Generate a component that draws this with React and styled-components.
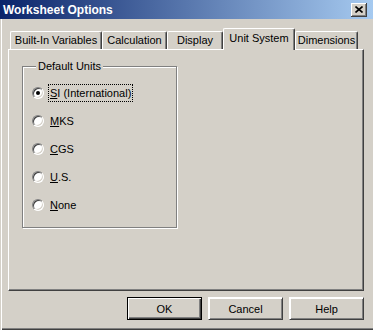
import React from 'react';
import styled, { createGlobalStyle } from 'styled-components';

const GlobalStyle = createGlobalStyle`
  html, body {
    margin: 0;
    padding: 0;
    background: #d4d0c8;
  }
  body {
    font-family: "Liberation Sans", Arial, sans-serif;
    font-size: 11px;
    color: #000;
  }
`;

const tabs = [
  { label: 'Built-In Variables', width: 92 },
  { label: 'Calculation', width: 65 },
  { label: 'Display', width: 56 },
  { label: 'Unit System', width: 72, active: true },
  { label: 'Dimensions', width: 63 },
];

const units = [
  { key: 'S', rest: 'I (International)', checked: true },
  { key: 'M', rest: 'KS' },
  { key: 'C', rest: 'GS' },
  { key: 'U', rest: '.S.' },
  { key: 'N', rest: 'one' },
];

const App = () => (
  <>
    <GlobalStyle />
    <Window>
      <TitleBar>
        <Title>Worksheet Options</Title>
        <CloseButton aria-label="Close">
          <svg width="8" height="7" viewBox="0 0 8 7">
            <path d="M0.5 0.5 L7.5 6.5 M7.5 0.5 L0.5 6.5" stroke="#000" strokeWidth="1.6" />
          </svg>
        </CloseButton>
      </TitleBar>
      <Body>
        <TabStrip>
          {tabs.map(t => (
            <Tab key={t.label} $width={t.width} $active={t.active}>
              {t.label}
            </Tab>
          ))}
        </TabStrip>
        <Panel>
          <GroupBox>
            <Legend>Default Units</Legend>
            <RadioList>
              {units.map(u => (
                <RadioRow key={u.key}>
                  <RadioDot $checked={u.checked} />
                  <RadioLabel $focused={u.checked}>
                    <u>{u.key}</u>
                    {u.rest}
                  </RadioLabel>
                </RadioRow>
              ))}
            </RadioList>
          </GroupBox>
        </Panel>
        <Footer>
          <Button $default>OK</Button>
          <Button>Cancel</Button>
          <Button>Help</Button>
        </Footer>
      </Body>
    </Window>
  </>
);

const Window = styled.div`
  width: 373px;
  height: 330px;
  display: flex;
  flex-direction: column;
  background: #d4d0c8;
  overflow: hidden;
`;

const TitleBar = styled.div`
  height: 19px;
  flex: none;
  display: flex;
  align-items: center;
  justify-content: space-between;
  padding: 0 6px 0 3px;
  background: linear-gradient(to right, #0a246a, #a6caf0);
`;

const Title = styled.span`
  color: #fff;
  font-weight: bold;
  font-size: 12px;
`;

const CloseButton = styled.div`
  width: 16px;
  height: 14px;
  box-sizing: border-box;
  background: #d4d0c8;
  display: flex;
  align-items: center;
  justify-content: center;
  box-shadow: inset -1px -1px 0 #404040, inset 1px 1px 0 #fff,
    inset -2px -2px 0 #808080, inset 2px 2px 0 #d4d0c8;
`;

const Body = styled.div`
  flex: 1;
  display: flex;
  flex-direction: column;
  padding: 9px 9px 0 8px;
  box-shadow: inset 1px 0 0 #d4d0c8, inset 2px 0 0 #fff,
    inset 0 -1px 0 #404040, inset 0 -2px 0 #808080;
`;

const TabStrip = styled.div`
  height: 21px;
  display: flex;
  align-items: flex-end;
  padding-left: 2px;
  position: relative;
  z-index: 1;
`;

const Tab = styled.div`
  width: ${p => p.$width}px;
  height: ${p => (p.$active ? 22 : 18)}px;
  margin-bottom: ${p => (p.$active ? -1 : 0)}px;
  box-sizing: border-box;
  display: flex;
  align-items: center;
  justify-content: center;
  padding-bottom: ${p => (p.$active ? 4 : 1)}px;
  background: #d4d0c8;
  border-top: 1px solid #fff;
  border-left: 1px solid #fff;
  border-right: 1px solid #404040;
  border-radius: 2px 2px 0 0;
  box-shadow: inset -1px 0 0 #808080;
  white-space: nowrap;
`;

const Panel = styled.div`
  height: 242px;
  box-sizing: border-box;
  padding: 10px 0 0 13px;
  border-top: 1px solid #fff;
  border-left: 1px solid #fff;
  border-right: 1px solid #404040;
  border-bottom: 1px solid #404040;
  box-shadow: inset -1px -1px 0 #808080;
`;

const GroupBox = styled.fieldset`
  width: 155px;
  box-sizing: border-box;
  margin: 0;
  padding: 0 0 8px 9px;
  border: 1px solid #808080;
  box-shadow: inset 1px 1px 0 #fff, 1px 1px 0 #fff;
`;

const Legend = styled.legend`
  padding: 0 2px;
  margin-left: 4px;
  background: #d4d0c8;
  line-height: 13px;
`;

const RadioList = styled.div`
  display: flex;
  flex-direction: column;
  padding-top: 6px;
`;

const RadioRow = styled.div`
  height: 28px;
  display: flex;
  align-items: center;
  gap: 5px;
`;

const RadioDot = styled.span`
  width: 12px;
  height: 12px;
  box-sizing: border-box;
  border-radius: 50%;
  background: #fff;
  border: 1px solid;
  border-color: #808080 #fff #fff #808080;
  box-shadow: inset 1px 1px 0 #404040, inset -1px -1px 0 #d4d0c8;
  display: flex;
  align-items: center;
  justify-content: center;

  &::after {
    content: '';
    width: 4px;
    height: 4px;
    border-radius: 50%;
    background: ${p => (p.$checked ? '#000' : 'transparent')};
  }
`;

const RadioLabel = styled.span`
  padding: 2px 1px;
  outline: ${p => (p.$focused ? '1px dotted #000' : 'none')};
  u {
    text-decoration: underline;
  }
`;

const Footer = styled.div`
  display: flex;
  justify-content: flex-end;
  gap: 6px;
  margin-top: 6px;
`;

const Button = styled.div`
  width: 75px;
  height: 23px;
  box-sizing: border-box;
  display: flex;
  align-items: center;
  justify-content: center;
  background: #d4d0c8;
  border: 1px solid ${p => (p.$default ? '#000' : 'transparent')};
  box-shadow: ${p =>
    p.$default
      ? 'inset 1px 1px 0 #fff, inset -1px -1px 0 #404040, inset -2px -2px 0 #808080'
      : 'inset 1px 1px 0 #fff, inset -1px -1px 0 #808080'};
  ${p =>
    !p.$default &&
    `
    border-color: #fff #404040 #404040 #fff;
  `}
`;

export default App;
